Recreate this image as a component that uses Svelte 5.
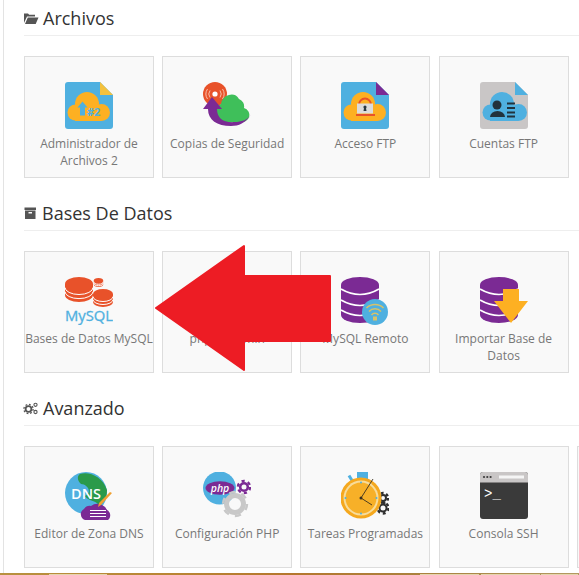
<script>
  const sections = [
    {
      title: "Archivos",
      icon: "folder",
      items: [
        { icon: "files", label: "Administrador de Archivos 2" },
        { icon: "backup", label: "Copias de Seguridad" },
        { icon: "ftp", label: "Acceso FTP" },
        { icon: "accounts", label: "Cuentas FTP" },
      ],
    },
    {
      title: "Bases De Datos",
      icon: "archive",
      items: [
        { icon: "mysql", label: "Bases de Datos MySQL" },
        { icon: "none", label: "phpMyAdmin" },
        { icon: "remote", label: "MySQL Remoto" },
        { icon: "import", label: "Importar Base de Datos" },
      ],
    },
    {
      title: "Avanzado",
      icon: "cogs",
      items: [
        { icon: "dns", label: "Editor de Zona DNS" },
        { icon: "php", label: "Configuración PHP" },
        { icon: "cron", label: "Tareas Programadas" },
        { icon: "ssh", label: "Consola SSH" },
        { icon: "none", label: "" },
      ],
    },
  ];
</script>

{#snippet database()}
  <path d="M0 8A19 8 0 0 1 38 8V38A19 8 0 0 1 0 38Z" fill="#7b2a94" />
  <path d="M0 12Q19 23 38 12M0 23Q19 34 38 23M0 33Q19 44 38 33" fill="none" stroke="#fff" stroke-width="1.6" />
{/snippet}

{#snippet disks(cx, cy, rx, ry, gap)}
  <path d="M{cx - rx} {cy}a{rx} {ry} 0 0 1 {rx * 2} 0v{gap * 2}a{rx} {ry} 0 0 1 {-rx * 2} 0z" fill="#e8522a" />
  <path d="M{cx - rx} {cy + ry * 0.5}a{rx} {ry} 0 0 0 {rx * 2} 0M{cx - rx} {cy + gap + ry * 0.3}a{rx} {ry} 0 0 0 {rx * 2} 0" fill="none" stroke="#fff" stroke-width="1" />
{/snippet}

{#snippet gear(cx, cy, r, w, color)}
  <circle {cx} {cy} {r} fill="none" stroke={color} stroke-width={w} />
  <circle {cx} {cy} r={r + w / 2 + 1} fill="none" stroke={color} stroke-width="2.4" stroke-dasharray={(Math.PI * (r + w / 2 + 1)) / 6 + " " + (Math.PI * (r + w / 2 + 1)) / 6} />
{/snippet}

{#snippet cloud(color, right)}
  <g fill={color}>
    <circle cx="10.500" cy="30.500" r="8" />
    <circle cx="22" cy="22" r="12" />
    <circle cx={right - 8.500} cy="30.500" r="8.500" />
    <rect x="10" y="28" width={right - 19} height="11" />
  </g>
{/snippet}

{#snippet sheet(color, fold)}
  <path d="M3 0H35L48 13V44a3 3 0 0 1-3 3H3a3 3 0 0 1-3-3V3a3 3 0 0 1 3-3Z" fill={color} />
  <path d="M35 0L48 13H35Z" fill={fold} />
{/snippet}

{#snippet appIcon(name)}
  <svg class="app-icon" viewBox="0 0 48 48" width="48" height="48">
    {#if name === "files"}
      {@render sheet("#4fb0e0", "#f4c13d")}
      {@render cloud("#fdb022", 45)}
      <path d="M17.500 19.500l5 6h-2.500v8h-5v-8h-2.500z" fill="#4fb0e0" />
      <text x="22" y="33.500" class="t-num">#2</text>
    {:else if name === "backup"}
      <circle cx="12" cy="12" r="12" fill="#e8522a" />
      <circle cx="12" cy="12" r="2.600" fill="#fff" />
      <path d="M7 8.500a6 6 0 0 0 0 7M17 8.500a6 6 0 0 1 0 7M4.500 7a9 9 0 0 0 0 10M19.500 7a9 9 0 0 1 0 10" fill="none" stroke="#f9c9b8" stroke-width="0.9" />
      <path d="M20 41a9 9 0 0 1-6-11 7 7 0 0 1 4-8 10 10 0 0 1 8-9 9 9 0 0 1 10 4 8 8 0 0 1 5 9 7 7 0 0 1 5 9 8 8 0 0 1-6 5Z" fill="#3fbf5a" />
      <path d="M5 27H14C14 36 20 41 32 40 38 40 44 38 48 33 42 41 36 44 28 44 14 44 5 38 5 27Z" fill="#7b2a94" />
      <path d="M9 15L19 27H0Z" fill="#7b2a94" />
    {:else if name === "ftp"}
      {@render sheet("#4fb0e0", "#7b2a94")}
      {@render cloud("#fdb022", 45)}
      <path d="M18 23a6 6.500 0 0 1 12 0" fill="none" stroke="#e8522a" stroke-width="2" />
      <rect x="16" y="21.500" width="16" height="10" fill="#dcdcdc" />
      <circle cx="24" cy="25" r="1.600" fill="#2b3a42" />
      <path d="M23.200 25h1.600l.7 4h-3z" fill="#2b3a42" />
      <rect x="15" y="32" width="19" height="2" fill="#e8522a" />
    {:else if name === "accounts"}
      {@render sheet("#c9c6c6", "#4fb0e0")}
      {@render cloud("#4fb0e0", 47)}
      <circle cx="17" cy="23" r="4.500" fill="#22323c" />
      <path d="M10 35a7.500 6 0 0 1 15 0Z" fill="#22323c" />
      <path d="M27 21.500h8M27 26h8M27 30.500h8M27 34.500h8" stroke="#22323c" stroke-width="2" />
    {:else if name === "mysql"}
      {@render disks(14, 7, 14, 7, 5.500)}
      {@render disks(33.500, 3.500, 4.700, 2.500, 2)}
      {@render disks(38, 17, 10, 5, 4)}
      <text x="24" y="44" class="t-mysql">MySQL</text>
    {:else if name === "remote"}
      {@render database()}
      <circle cx="34" cy="35" r="13" fill="#4fb0e0" />
      <path d="M25.500 31a12 12 0 0 1 17 0M28 34.500a8 8 0 0 1 12 0M30.500 38a4.500 4.500 0 0 1 7 0" fill="none" stroke="#d8c267" stroke-width="1.500" />
      <rect x="32" y="39.500" width="4" height="4" fill="#d8c267" />
    {:else if name === "import"}
      {@render database()}
      <path d="M23 12H39V24H48L31 46 14 24H23Z" fill="#fdb022" />
    {:else if name === "dns"}
      <circle cx="21" cy="21" r="21" fill="#4fb0e0" />
      <path d="M15 2C24-1 38 5 42 18 42 26 38 32 34 34 32 28 24 30 20 24 28 20 22 12 16 12 12 8 12 4 15 2Z" fill="#2a9a4a" />
      <text x="21" y="26.500" class="t-dns">DNS</text>
      <path d="M20 48a6 6 0 0 1-1-11 7 7 0 0 1 7-3 10 10 0 0 1 11-1 8 8 0 0 1 5 5 6 6 0 0 1 1 10Z" fill="#7b2a94" />
      <path d="M25 38.500H41M25 41.500H41M25 44.500H41" stroke="#fff" stroke-width="1" />
      <path d="M47 21L36 33l-3 2 1-4L45 20Z" fill="#f0a030" />
    {:else if name === "php"}
      <circle cx="16.500" cy="16" r="16.500" fill="#4fb0e0" />
      <ellipse cx="17" cy="16" rx="14.500" ry="6.800" fill="#7b2a94" />
      <text x="17" y="19.500" class="t-php">php</text>
      {@render gear(41, 15, 3.800, 2.600, "#7b2a94")}
      {@render gear(32, 32, 8.500, 5, "#c8c8c8")}
    {:else if name === "cron"}
      <rect x="16" y="0" width="11" height="7" fill="#4fb0e0" />
      <rect x="8" y="3" width="3" height="6" transform="rotate(-30 9.500 6)" fill="#4fb0e0" />
      {@render gear(42, 26, 3, 2, "#2f2f2f")}
      {@render gear(42, 36, 3.500, 2, "#2f2f2f")}
      <circle cx="20" cy="26" r="20.500" fill="#f5a81e" />
      <circle cx="20" cy="26" r="17.500" fill="#f8dc9a" />
      <circle cx="20" cy="26" r="15.500" fill="#f7b028" />
      <circle cx="20" cy="10.500" r="1" fill="#4fb0e0" /><circle cx="20" cy="41.500" r="1" fill="#4fb0e0" />
      <circle cx="4.500" cy="26" r="1" fill="#4fb0e0" /><circle cx="35.500" cy="26" r="1" fill="#4fb0e0" />
      <path d="M20 26L32 7M20 26L31 33" stroke="#3a3020" stroke-width="0.900" fill="none" />
      <circle cx="20" cy="26" r="1.500" fill="#3a3020" />
    {:else if name === "ssh"}
      <rect x="0" y="0" width="48" height="47" rx="3" fill="#3a3a3a" />
      <path d="M3 0H45a3 3 0 0 1 3 3V10.500H0V3a3 3 0 0 1 3-3Z" fill="#c9c6c6" />
      <circle cx="4" cy="5" r="1.100" fill="#3a3a3a" /><circle cx="7.300" cy="5" r="1.100" fill="#3a3a3a" /><circle cx="10.600" cy="5" r="1.100" fill="#3a3a3a" />
      <rect x="19" y="3.500" width="25" height="3" fill="#f5f5f5" />
      <text x="4" y="26" class="t-ssh">&gt;_</text>
    {/if}
  </svg>
{/snippet}

<div class="page">
  {#each sections as section}
    <section class="group">
      <h2 class="heading">
        {#if section.icon === "folder"}
          <svg class="heading-icon" viewBox="0 0 16 14" width="16" height="14">
            <path d="M1 12V2.500h4l1.200 1.300H12V5.500H4L1 12ZM2 13L4.800 6.500H15.500L12.700 13Z" fill="#555" />
          </svg>
        {:else if section.icon === "archive"}
          <svg class="heading-icon" viewBox="0 0 15 14" width="15" height="14">
            <path d="M1.500 1.500H13V4H1.500ZM2 4.500H12.500V13H2ZM5.500 6V7.500H9V6Z" fill="#555" fill-rule="evenodd" />
          </svg>
        {:else}
          <svg class="heading-icon" viewBox="0 0 16 14" width="16" height="14">
            <circle cx="5.500" cy="8" r="2.900" fill="none" stroke="#555" stroke-width="1.800" />
            <circle cx="5.500" cy="8" r="4.600" fill="none" stroke="#555" stroke-width="1.300" stroke-dasharray="1.800 1.800" />
            <circle cx="12.500" cy="3.800" r="1.600" fill="none" stroke="#555" stroke-width="1.100" />
            <circle cx="12.500" cy="11" r="1.600" fill="none" stroke="#555" stroke-width="1.100" />
          </svg>
        {/if}
        {section.title}
      </h2>
      <div class="cards">
        {#each section.items as item}
          <div class="card">
            {#if item.icon !== "none"}
              {@render appIcon(item.icon)}
            {:else}
              <div class="icon-gap"></div>
            {/if}
            <span class="label">{item.label}</span>
          </div>
        {/each}
      </div>
    </section>
  {/each}

  <!-- red annotation drawn over the page -->
  <svg class="arrow" viewBox="0 0 579 575" width="579" height="575">
    <path d="M156 308L244 246V276H330V341H244V370Z" fill="#ed1c24" stroke="#ed1c24" stroke-width="2" stroke-linejoin="round" />
  </svg>

  <div class="taskbar">
    <div class="tab tab-a"></div>
    <div class="tab tab-b"></div>
    <div class="tab tab-c"></div>
    <div class="tab tab-d"></div>
  </div>
</div>

<style>
  :global(body) {
    margin: 0;
    background: #fff;
  }
  .page {
    position: relative;
    width: 579px;
    height: 575px;
    overflow: hidden;
    box-sizing: border-box;
    padding-left: 24px;
    font-family: "Open Sans", sans-serif;
  }
  .page::before {
    content: "";
    position: absolute;
    left: 3px;
    top: 0;
    bottom: 0;
    width: 1px;
    background: #e3e3e3;
  }
  .group {
    height: 195px;
  }
  .heading {
    display: flex;
    align-items: center;
    gap: 4px;
    width: 555px;
    height: 35px;
    margin: 0 0 20px;
    border-bottom: 1px solid #eee;
    font-size: 18px;
    font-weight: 400;
    color: #333;
  }
  .heading-icon {
    margin-left: -1px;
    flex: none;
  }
  .cards {
    display: flex;
    gap: 8.200px;
    width: 700px;
  }
  .card {
    flex: none;
    width: 130px;
    height: 122px;
    box-sizing: border-box;
    padding-top: 25px;
    border: 1px solid #ddd;
    background: #f9f9f9;
    display: flex;
    flex-direction: column;
    align-items: center;
    text-align: center;
  }
  .app-icon, .icon-gap {
    flex: none;
    width: 48px;
    height: 48px;
    margin-bottom: 5px;
  }
  .label {
    font-size: 12px;
    line-height: 17px;
    color: #777;
  }
  .t-num {
    font: 700 11px "Open Sans", sans-serif;
    fill: #4fb0e0;
  }
  .t-mysql {
    font: 400 14.800px "Open Sans", sans-serif;
    fill: #4fb0e0;
    stroke: #4fb0e0;
    stroke-width: 0.3px;
    text-anchor: middle;
  }
  .t-dns {
    font: 600 14.500px "Open Sans", sans-serif;
    fill: #fff;
    text-anchor: middle;
  }
  .t-php {
    font: italic 600 10.500px "Open Sans", sans-serif;
    fill: #fff;
    text-anchor: middle;
  }
  .t-ssh {
    font: 400 14px "Liberation Mono", monospace;
    fill: #fff;
  }
  .arrow {
    position: absolute;
    left: 0;
    top: 0;
  }
  .taskbar {
    position: absolute;
    left: 0;
    right: 0;
    bottom: 0;
    height: 2px;
    display: flex;
    background: linear-gradient(90deg, #b8913f 0%, #b98534 30%, #b5772e 50%, #a98340 75%, #b39a62 100%);
  }
  .tab {
    height: 1px;
    margin-top: 1px;
    background: #e4d4ae;
  }
  .tab-a { margin-left: 49px; width: 58px; }
  .tab-b { margin-left: 313px; width: 59px; }
  .tab-c { margin-left: 2px; width: 59px; }
  .tab-d { margin-left: 1px; width: 37px; }
</style>
